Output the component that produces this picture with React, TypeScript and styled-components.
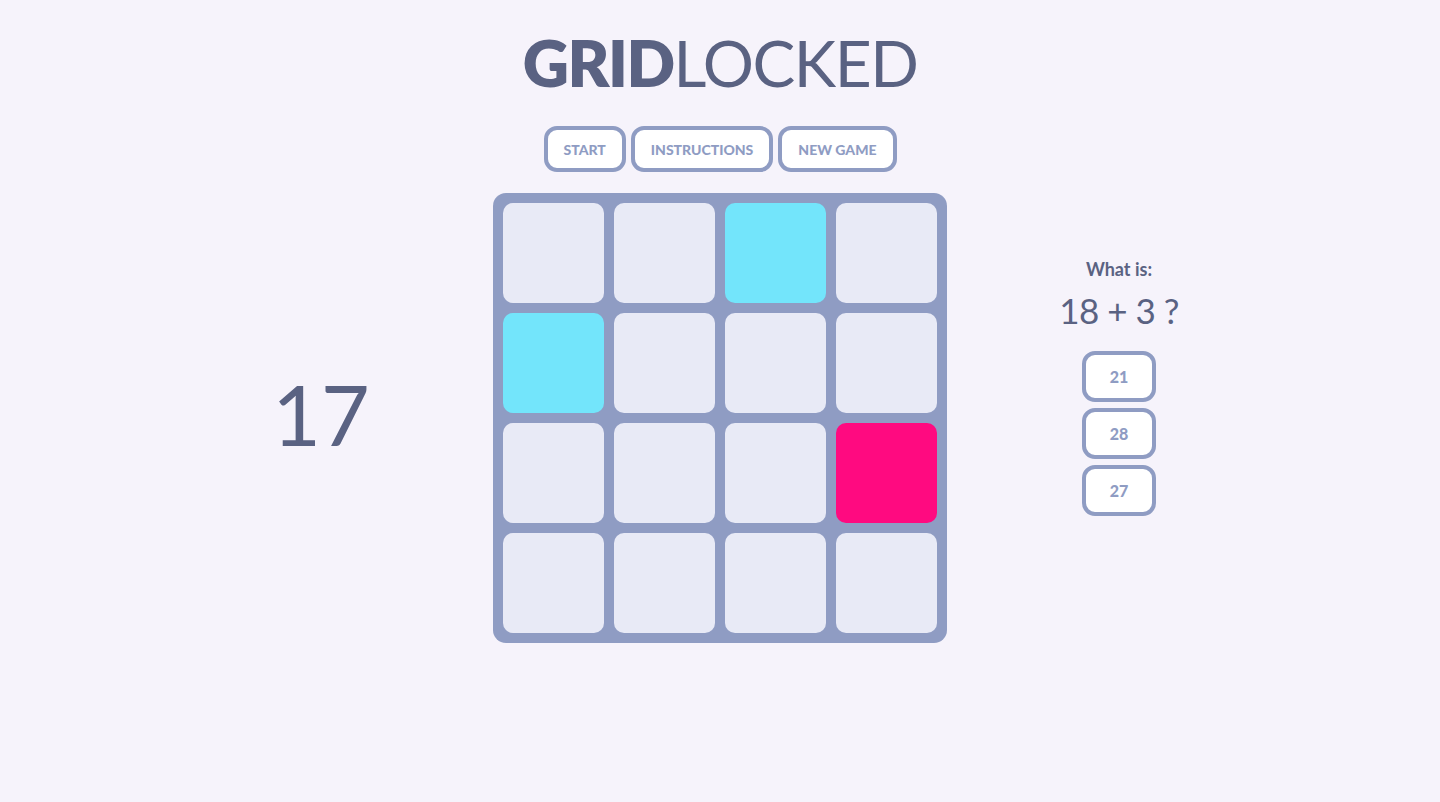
import * as React from "react";
import styled, { createGlobalStyle } from "styled-components";

const GlobalStyle = createGlobalStyle`
  html, body {
    margin: 0;
    padding: 0;
    background: #f6f3fb;
    font-family: Lato, "Open Sans", sans-serif;
    color: #5a6282;
  }
`;

const Page = styled.div`
  min-height: 802px;
  display: flex;
  flex-direction: column;
  align-items: center;
`;

const Title = styled.h1`
  margin: 25px 0 0;
  font-size: 64px;
  line-height: 76px;
  font-weight: 400;
  letter-spacing: -1.5px;
  color: #5a6282;

  b {
    font-weight: 800;
  }
`;

const Controls = styled.div`
  display: flex;
  gap: 5px;
  margin-top: 25px;
`;

const Button = styled.button<{ $width?: number; $height?: number; $size?: number }>`
  box-sizing: border-box;
  width: ${(p) => (p.$width ? `${p.$width}px` : "auto")};
  height: ${(p) => p.$height || 46}px;
  padding: 0 16px;
  background: #ffffff;
  border: 4px solid #8f9cc3;
  border-radius: 13px;
  font-family: Lato, sans-serif;
  font-weight: 900;
  font-size: ${(p) => p.$size || 14}px;
  color: #8f9cc3;
  cursor: pointer;
`;

const Main = styled.div`
  display: grid;
  grid-template-columns: 344px 454px 344px;
  margin-top: 21px;
`;

const Score = styled.div`
  align-self: center;
  text-align: center;
  font-size: 84px;
  font-weight: 400;
  line-height: 1;
  color: #5a6282;
  padding-bottom: 8px;
`;

const Board = styled.div`
  display: grid;
  grid-template-columns: repeat(4, 101px);
  grid-auto-rows: 100px;
  gap: 10px;
  padding: 10px;
  background: #8f9cc3;
  border-radius: 13px;
`;

const Cell = styled.div<{ $color: string }>`
  background: ${(p) => p.$color};
  border-radius: 10px;
`;

const Question = styled.div`
  display: flex;
  flex-direction: column;
  align-items: center;
  padding-top: 65px;
`;

const Prompt = styled.div`
  font-size: 18px;
  font-weight: 700;
  line-height: 22px;
`;

const Sum = styled.div`
  font-size: 35px;
  line-height: 44px;
  letter-spacing: -0.5px;
  margin: 8px 0 19px;
`;

const Answers = styled.div`
  display: flex;
  flex-direction: column;
  gap: 6px;
`;

const colors: Record<string, string> = {
  e: "#e8eaf6",
  c: "#73e5fb",
  p: "#ff0a80",
};

const layout = ["eece", "ceee", "eeep", "eeee"];

export default function App() {
  return (
    <Page>
      <GlobalStyle />
      <Title>
        <b>GRID</b>LOCKED
      </Title>
      <Controls>
        <Button>START</Button>
        <Button>INSTRUCTIONS</Button>
        <Button>NEW GAME</Button>
      </Controls>
      <Main>
        <Score>17</Score>
        <Board>
          {layout.join("").split("").map((k, i) => (
            <Cell key={i} $color={colors[k]} />
          ))}
        </Board>
        <Question>
          <Prompt>What is:</Prompt>
          <Sum>18 + 3 ?</Sum>
          <Answers>
            <Button $width={74} $height={51} $size={16}>21</Button>
            <Button $width={74} $height={51} $size={16}>28</Button>
            <Button $width={74} $height={51} $size={16}>27</Button>
          </Answers>
        </Question>
      </Main>
    </Page>
  );
}
